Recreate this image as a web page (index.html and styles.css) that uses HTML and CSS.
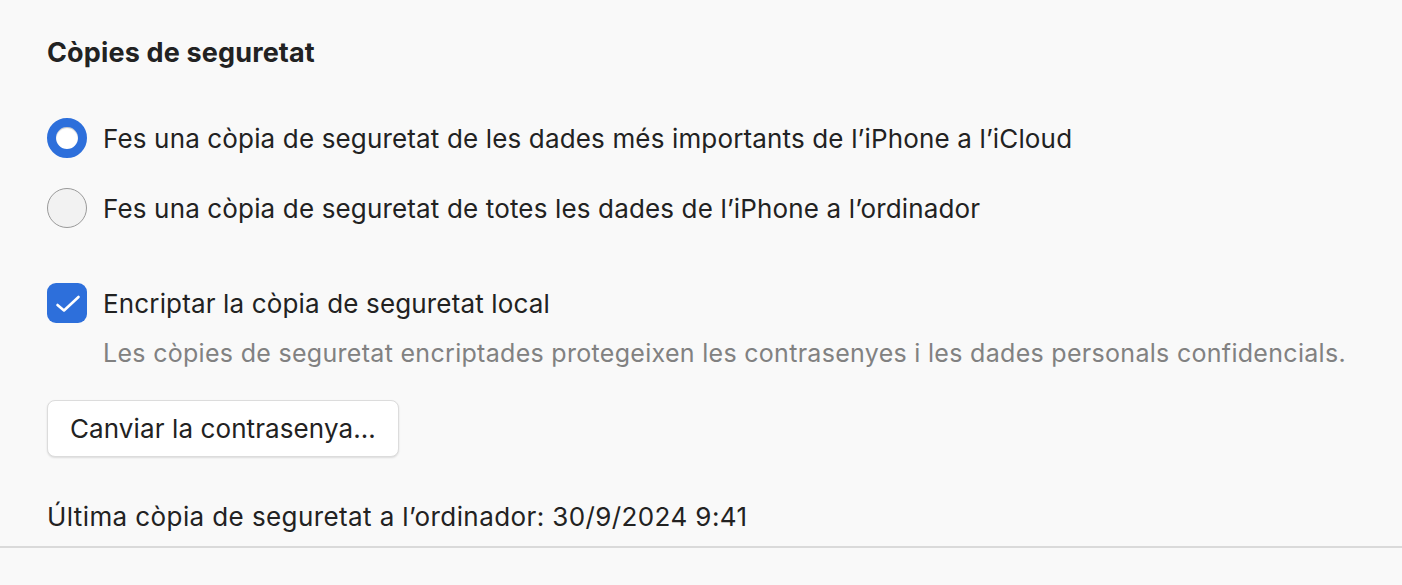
FILE: index.html
```html
<!DOCTYPE html>
<html lang="ca">
  <head>
    <meta charset="UTF-8" />
    <meta name="viewport" content="width=device-width, initial-scale=1.0" />
    <title>Còpies de seguretat</title>
    <link rel="stylesheet" href="styles.css">
  </head>
  <body>
    <section class="backup-panel">
      <div class="panel-body">
        <h2 class="panel-title">Còpies de seguretat</h2>

        <div class="radio-group">
          <label class="option">
            <span class="radio radio-on"></span>
            <span class="option-text">Fes una còpia de seguretat de les dades més importants de l’iPhone a l’iCloud</span>
          </label>
          <label class="option">
            <span class="radio"></span>
            <span class="option-text">Fes una còpia de seguretat de totes les dades de l’iPhone a l’ordinador</span>
          </label>
        </div>

        <label class="option check-option">
          <span class="checkbox">
            <svg width="40" height="40" viewBox="0 0 40 40">
              <path d="M10.5 22 L17 27.5 L31.5 14" fill="none" stroke="#fff" stroke-width="2.6" stroke-linecap="round" stroke-linejoin="round" />
            </svg>
          </span>
          <span class="option-text">Encriptar la còpia de seguretat local</span>
        </label>
        <p class="hint">Les còpies de seguretat encriptades protegeixen les contrasenyes i les dades personals confidencials.</p>

        <button class="btn" type="button">Canviar la contrasenya…</button>

        <p class="last-backup">Última còpia de seguretat a l’ordinador: 30/9/2024 9:41</p>
      </div>
      <hr class="divider" />
    </section>
  </body>
</html>
```

FILE: styles.css
```css
body {
  margin: 0;
  background-color: #f9f9f9;
  font-family: Inter, "Noto Sans", sans-serif;
  color: #222;
}

.panel-body {
  display: flex;
  flex-direction: column;
  align-items: flex-start;
  padding: 37px 47px 0;
}

.panel-title {
  margin: 0;
  font-size: 27px;
  line-height: 32px;
  letter-spacing: 0.15px;
  font-weight: 700;
}

.radio-group {
  display: flex;
  flex-direction: column;
  gap: 30px;
  margin-top: 49px;
}

.option {
  display: flex;
  align-items: center;
  gap: 16px;
  height: 40px;
  font-size: 26px;
  letter-spacing: 0.15px;
}

.radio {
  width: 40px;
  height: 40px;
  box-sizing: border-box;
  border-radius: 50%;
  border: 1.5px solid #9a9a9a;
  background: #f2f2f2;
  flex-shrink: 0;
}

.radio-on {
  border: 9px solid #2d6fdb;
  background: #fff;
  box-shadow: inset 0 1px 1px rgba(0, 0, 0, 0.25);
}

.check-option {
  margin-top: 55px;
}

.checkbox {
  width: 40px;
  height: 40px;
  border-radius: 9px;
  background: #2d6fdb;
  display: flex;
  flex-shrink: 0;
}

.hint {
  margin: 15px 0 0 56px;
  font-size: 25px;
  line-height: 30px;
  letter-spacing: 0.3px;
  color: #818181;
}

.btn {
  margin-top: 32px;
  height: 57px;
  padding: 0 22px;
  font-family: inherit;
  font-size: 26px;
  letter-spacing: 0.1px;
  color: #222;
  background: #fff;
  border: 1px solid #dcdcdc;
  border-radius: 8px;
  box-shadow: 0 1px 2px rgba(0, 0, 0, 0.12);
}

.last-backup {
  margin: 45px 0 0;
  font-size: 26px;
  line-height: 30px;
  letter-spacing: 0.4px;
}

.divider {
  margin: 14px 0 0;
  border: 0;
  height: 2px;
  background: #dadada;
}
```
